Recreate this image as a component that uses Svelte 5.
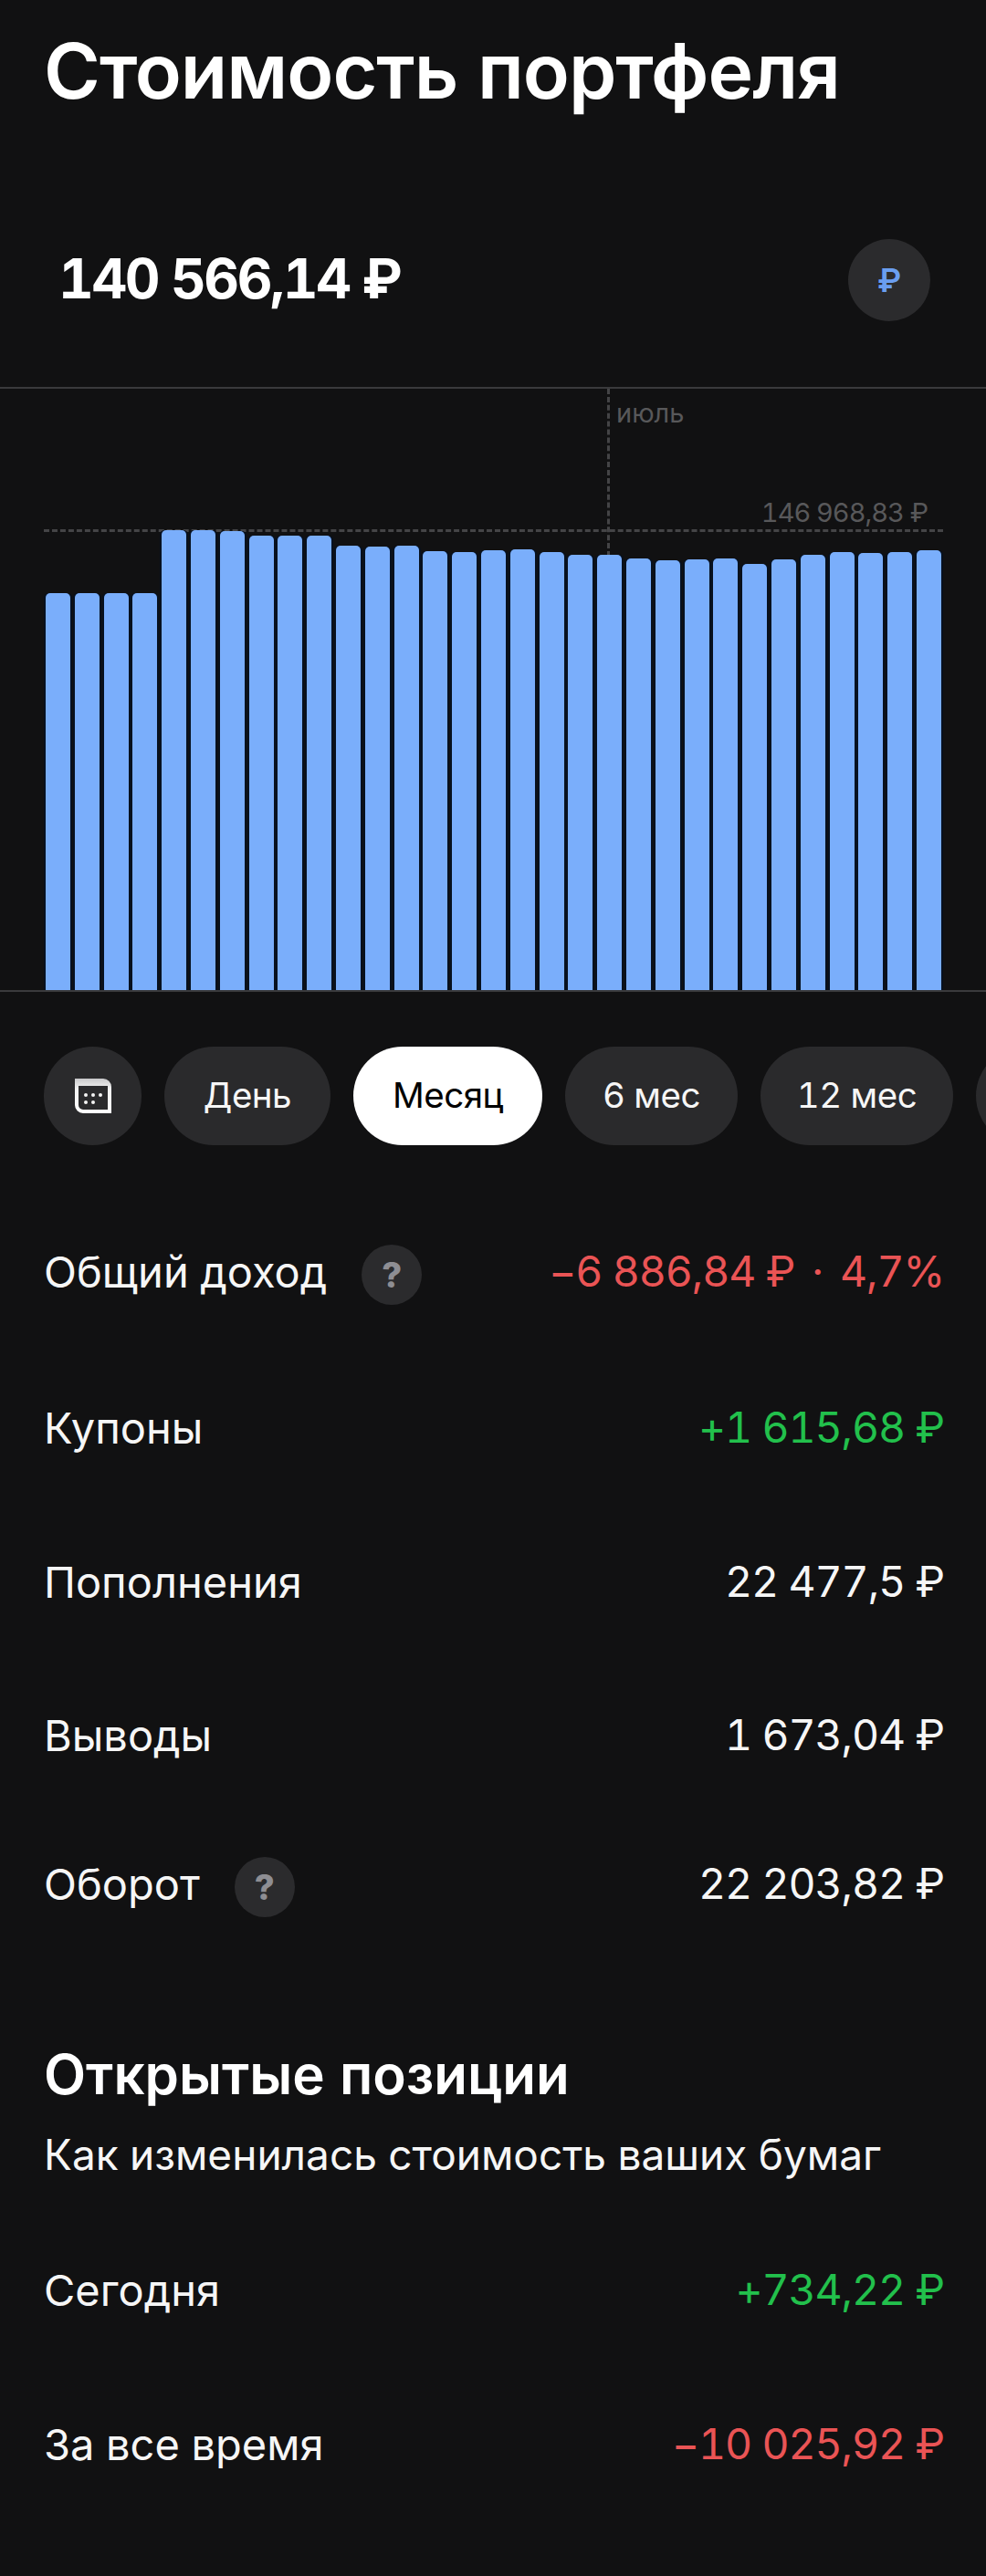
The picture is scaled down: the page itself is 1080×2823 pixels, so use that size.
<script>
  const tops = [650,650,650,650,581,581,582,587,587,587,598,599,598,604,605,603,602,605,608,608,612,614,613,612,618,613,608,605,606,605,603];
  const bottom = 1085;
  const bars = tops.map((t) => bottom - t);
  const chips = ['День', 'Месяц', '6 мес', '12 мес'];
  const rows = [
    { label: 'Общий доход', value: '−6 886,84 ₽\u2009 · \u20094,7%', tone: 'neg', help: true },
    { label: 'Купоны', value: '+1 615,68 ₽', tone: 'pos' },
    { label: 'Пополнения', value: '22 477,5 ₽', tone: '' },
    { label: 'Выводы', value: '1 673,04 ₽', tone: '' },
    { label: 'Оборот', value: '22 203,82 ₽', tone: '', help: true }
  ];
</script>

<main class="page">
  <h1 class="title">Стоимость портфеля</h1>

  <section class="balance">
    <div class="amount">140 566,14 ₽</div>
    <div class="currency">₽</div>
  </section>

  <section class="chart">
    <div class="vline"></div>
    <div class="hline"></div>
    <div class="month">июль</div>
    <div class="max">146 968,83 ₽</div>
    <div class="bars">
      {#each bars as h}
        <div class="bar" style="height:{h}px"></div>
      {/each}
    </div>
  </section>

  <nav class="chips">
    <div class="chip cal">
      <svg width="40" height="38" viewBox="0 0 40 38">
        <defs>
          <linearGradient id="calg" x1="0" y1="0" x2="0" y2="1">
            <stop offset="0" stop-color="#c9c9cb" />
            <stop offset="0.3" stop-color="#f2f2f2" />
            <stop offset="1" stop-color="#ffffff" />
          </linearGradient>
        </defs>
        <path fill="url(#calg)" fill-rule="evenodd" d="M0 0H31A9 9 0 0 1 40 9V38H9A9 9 0 0 1 0 29ZM4 8V29A5 5 0 0 0 9 34H36V8Z" />
        <g fill="#f4f4f4">
          <circle cx="12" cy="18" r="2" /><circle cx="20" cy="18" r="2" /><circle cx="28" cy="18" r="2" />
          <circle cx="12" cy="26" r="2" /><circle cx="20" cy="26" r="2" />
        </g>
      </svg>
    </div>
    {#each chips as c}
      <div class="chip" class:active={c === 'Месяц'}>{c}</div>
    {/each}
    <div class="chip ghost" aria-hidden="true"></div>
  </nav>

  <section class="rows">
    {#each rows as r}
      <div class="row">
        <div class="label">
          {r.label}
          {#if r.help}<span class="help">?</span>{/if}
        </div>
        <div class="value {r.tone}">{r.value}</div>
      </div>
    {/each}
  </section>

  <section class="open">
    <h2>Открытые позиции</h2>
    <p>Как изменилась стоимость ваших бумаг</p>
    <div class="row today">
      <div class="label">Сегодня</div>
      <div class="value pos">+734,22 ₽</div>
    </div>
    <div class="row all">
      <div class="label">За все время</div>
      <div class="value neg">−10 025,92 ₽</div>
    </div>
  </section>
</main>

<style>
  :global(body) {
    margin: 0;
    background: #111112;
  }
  .page {
    width: 1080px;
    height: 2823px;
    overflow: hidden;
    background: #111112;
    color: #f6f6f6;
    font-family: Inter, "Noto Sans", sans-serif;
    font-variant-numeric: tabular-nums;
  }
  .title {
    margin: 0;
    padding: 28px 48px 0;
    font-size: 84px;
    line-height: 100px;
    font-weight: 600;
    letter-spacing: -1px;
    color: #fff;
  }
  .balance {
    display: flex;
    justify-content: space-between;
    align-items: center;
    margin-top: 134px;
    padding: 0 61px 0 64px;
    height: 90px;
  }
  .amount {
    font-size: 60px;
    font-weight: 650;
    letter-spacing: -2.4px;
    color: #fff;
    position: relative;
    top: -2px;
  }
  .currency {
    width: 90px;
    height: 90px;
    border-radius: 50%;
    background: #2b2b2d;
    color: #6a9ef0;
    font-size: 36px;
    font-weight: 600;
    display: flex;
    align-items: center;
    justify-content: center;
  }
  .chart {
    position: relative;
    margin-top: 72px;
    border-top: 2px solid #3a3a3c;
    border-bottom: 2px solid #3a3a3c;
    box-sizing: border-box;
    height: 663px;
  }
  .bars {
    position: absolute;
    left: 50px;
    right: 49px;
    bottom: 0;
    display: flex;
    align-items: flex-end;
    justify-content: space-between;
  }
  .bar {
    width: 27px;
    background: #7aaefb;
    border-radius: 5px 5px 0 0;
    box-shadow: 2px 0 0 #07111f, -2px 0 0 #07111f;
  }
  .vline {
    position: absolute;
    left: 665px;
    top: 0;
    height: 184px;
    border-left: 3px dashed #444446;
  }
  .hline {
    position: absolute;
    left: 48px;
    right: 47px;
    top: 154px;
    border-top: 3px dashed #444446;
  }
  .month {
    position: absolute;
    left: 675px;
    top: 9px;
    font-size: 29px;
    line-height: 36px;
    color: #58585a;
  }
  .max {
    position: absolute;
    right: 64px;
    top: 118px;
    font-size: 29px;
    line-height: 36px;
    letter-spacing: -1px;
    color: #58585a;
  }
  .chips {
    display: flex;
    gap: 25px;
    margin-top: 60px;
    padding-left: 48px;
    height: 108px;
    overflow: hidden;
  }
  .chip {
    flex: none;
    height: 108px;
    width: 182px;
    border-radius: 54px;
    background: #2a2a2c;
    font-size: 38.5px;
    line-height: 46px;
    letter-spacing: -0.5px;
    padding-bottom: 3px;
    display: flex;
    align-items: center;
    justify-content: center;
    box-sizing: border-box;
  }
  .chip:nth-child(3) { width: 207px; }
  .chip:nth-child(4) { width: 189px; }
  .chip:nth-child(5) { width: 211px; }
  .chip.cal {
    width: 107px;
    padding: 0;
  }
  .chip.ghost {
    width: 120px;
  }
  .chip.active {
    background: #fff;
    color: #000;
  }
  .rows {
    margin-top: 105px;
  }
  .row {
    display: flex;
    justify-content: space-between;
    align-items: center;
    padding: 0 46px 0 48px;
    height: 66px;
    font-size: 47px;
  }
  .value {
    font-size: 46.5px;
    letter-spacing: -1.1px;
  }
  .rows .row:nth-child(2) { margin-top: 105px; }
  .rows .row:nth-child(3) { margin-top: 103px; }
  .rows .row:nth-child(4) { margin-top: 102px; }
  .rows .row:nth-child(5) { margin-top: 97px; }
  .label {
    display: flex;
    align-items: center;
    gap: 38px;
  }
  .help {
    width: 66px;
    height: 66px;
    border-radius: 50%;
    background: #2b2b2d;
    color: #8e8e93;
    font-size: 38px;
    font-weight: 800;
    display: flex;
    align-items: center;
    justify-content: center;
    position: relative;
    top: 4px;
  }
  .pos { color: #22c04c; }
  .neg { color: #ea5455; }
  .open {
    margin-top: 140px;
  }
  h2 {
    margin: 0;
    padding: 0 48px;
    font-size: 60px;
    line-height: 72px;
    font-weight: 600;
    color: #fff;
  }
  p {
    margin: 24px 0 0;
    padding: 0 48px;
    font-size: 46px;
    line-height: 56px;
  }
  .today { margin-top: 87px; }
  .all { margin-top: 103px; }
</style>
